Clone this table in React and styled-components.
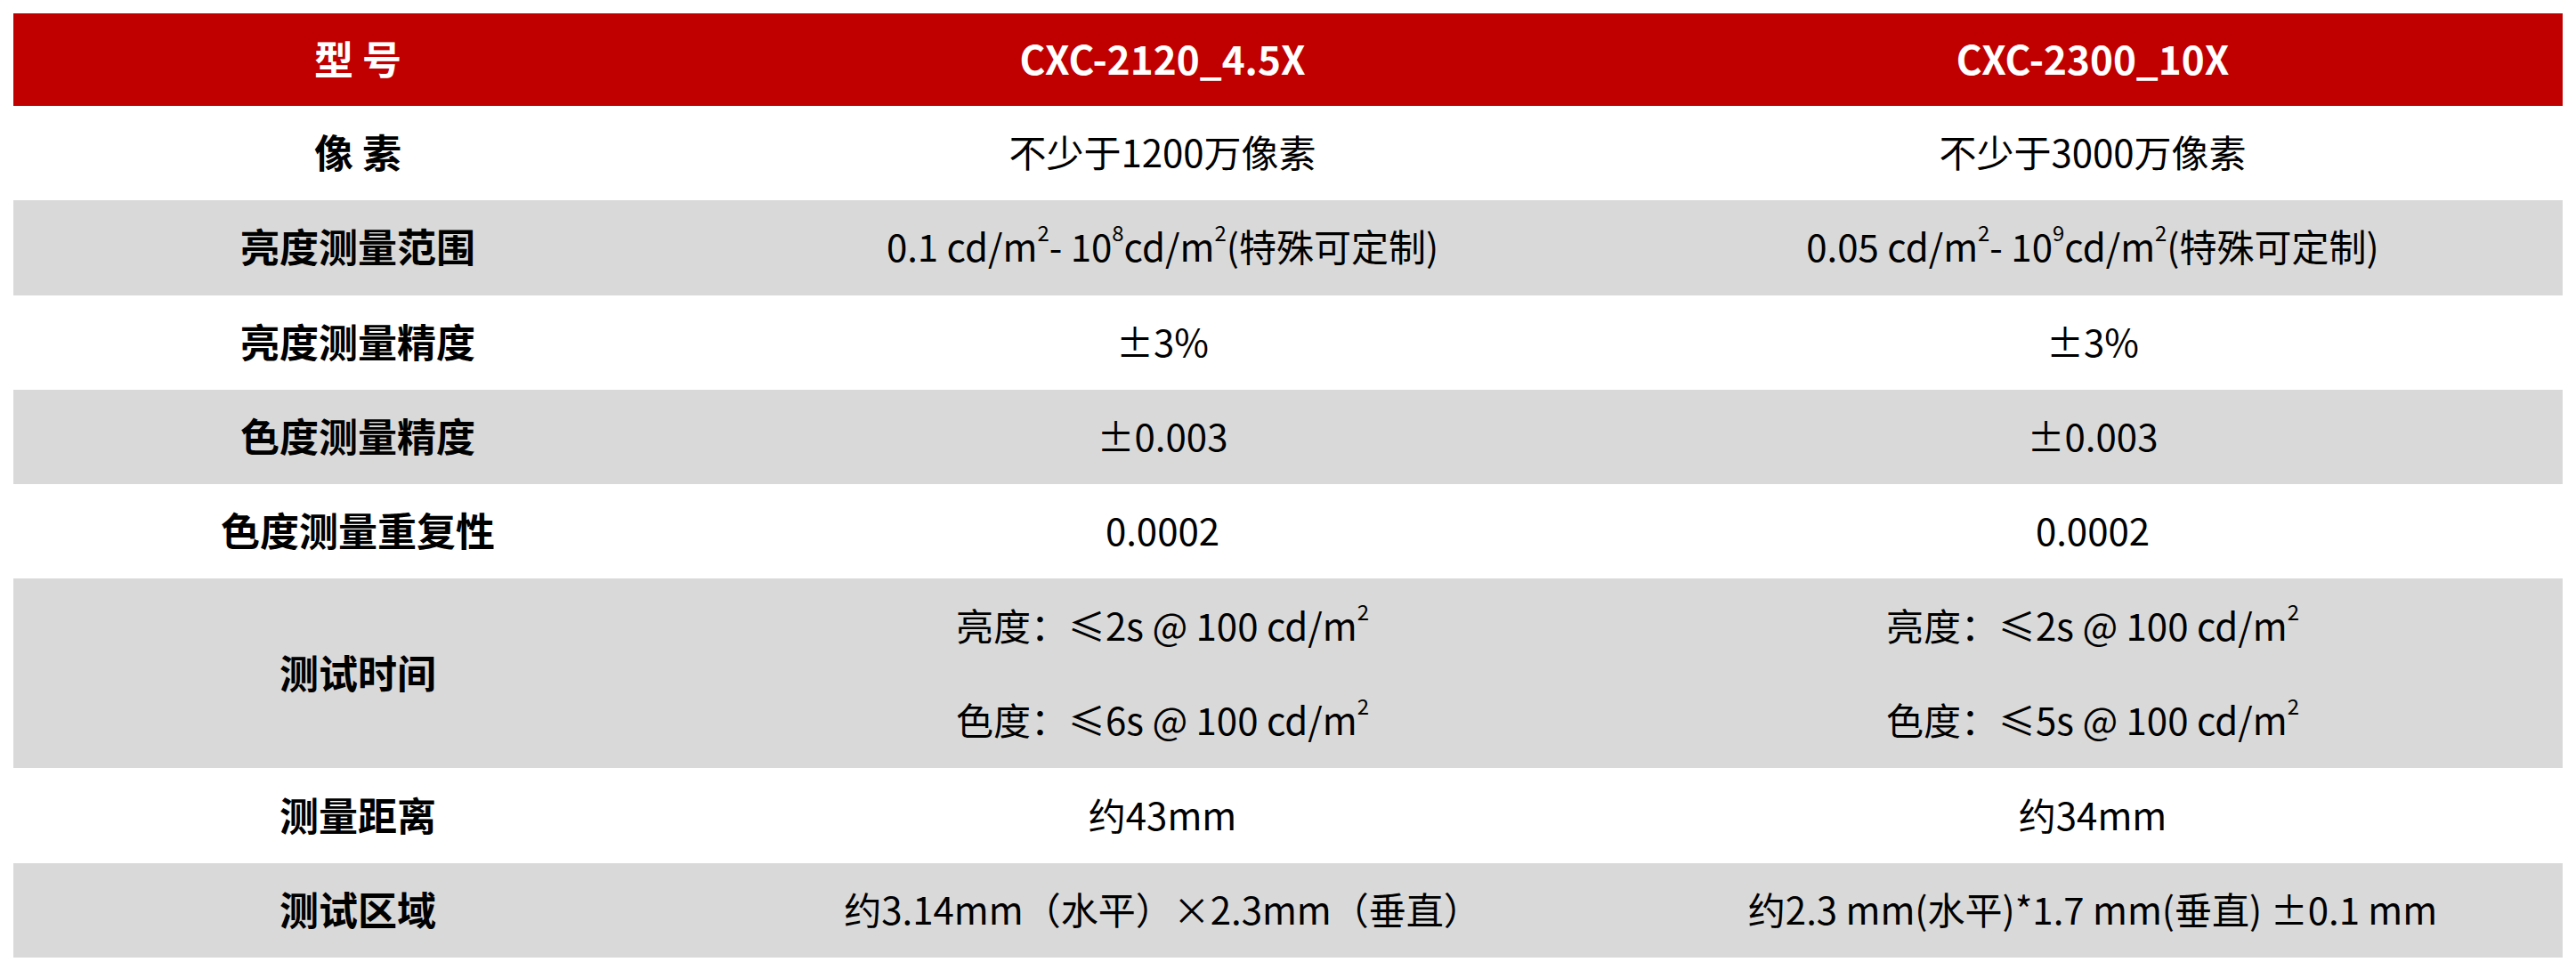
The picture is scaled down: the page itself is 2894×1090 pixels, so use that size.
import React from "react";
import styled, { createGlobalStyle } from "styled-components";

const Global = createGlobalStyle`
  html, body { margin: 0; padding: 0; background: #ffffff; }
  body { font-family: "Noto Sans CJK SC", "Noto Sans", sans-serif; }
  *, *::before, *::after { box-sizing: border-box; }
`;

const Page = styled.div`
  padding: 15px 15px 0 15px;
`;

const Table = styled.table`
  width: 100%;
  border-collapse: collapse;
  table-layout: fixed;
  font-family: "Noto Sans CJK SC", "Noto Sans", sans-serif;
  color: #000000;
`;

const HeadRow = styled.tr`
  background: #c00000;
  height: 104px;
`;

const HeadCell = styled.th`
  padding: 0 0 4px 0;
  color: #ffffff;
  font-size: 44px;
  font-weight: 700;
  text-align: center;
  vertical-align: middle;
  line-height: 1;
`;

const Row = styled.tr`
  background: ${(p) => (p.$shade ? "#d9d9d9" : "#ffffff")};
  height: ${(p) => (p.$double ? "213px" : "106.3px")};
`;

const Label = styled.td`
  padding: 0 0 4px 0;
  text-align: center;
  vertical-align: middle;
  font-size: 44px;
  font-weight: 700;
  line-height: 1;
`;

const Value = styled.td`
  padding: ${(p) => (p.$double ? "0" : "0 0 4px 0")};
  text-align: center;
  vertical-align: middle;
  font-size: 42px;
  font-weight: 400;
  line-height: 1;
`;

const Lines = styled.div`
  display: flex;
  flex-direction: column;
`;

const Line = styled.div`
  height: 106.5px;
  padding-bottom: 4px;
  display: flex;
  align-items: center;
  justify-content: center;
`;

const Sup = styled.sup`
  font-size: 0.57em;
  line-height: 0;
  vertical-align: 0.95em;
`;

const M2 = () => (
  <>
    cd/m<Sup>2</Sup>
  </>
);

const rows = [
  { label: "像 素", a: "不少于1200万像素", b: "不少于3000万像素" },
  {
    label: "亮度测量范围",
    a: (
      <>
        0.1 <M2 />- 10<Sup>8</Sup>
        <M2 />(特殊可定制)
      </>
    ),
    b: (
      <>
        0.05 <M2 />- 10<Sup>9</Sup>
        <M2 />(特殊可定制)
      </>
    ),
  },
  { label: "亮度测量精度", a: "±3%", b: "±3%" },
  { label: "色度测量精度", a: "±0.003", b: "±0.003" },
  { label: "色度测量重复性", a: "0.0002", b: "0.0002" },
  {
    label: "测试时间",
    double: true,
    a: [
      <>亮度：≤2s @ 100 <M2 /></>,
      <>色度：≤6s @ 100 <M2 /></>,
    ],
    b: [
      <>亮度：≤2s @ 100 <M2 /></>,
      <>色度：≤5s @ 100 <M2 /></>,
    ],
  },
  { label: "测量距离", a: "约43mm", b: "约34mm" },
  {
    label: "测试区域",
    a: "约3.14mm（水平）×2.3mm（垂直）",
    b: "约2.3 mm(水平)*1.7 mm(垂直) ±0.1 mm",
  },
];

const renderValue = (v, dbl) =>
  dbl ? (
    <Lines>
      {v.map((l, i) => (
        <Line key={i}>
          <span>{l}</span>
        </Line>
      ))}
    </Lines>
  ) : (
    v
  );

export default function App() {
  return (
    <>
      <Global />
      <Page>
        <Table>
          <colgroup>
            <col style={{ width: "774px" }} />
            <col style={{ width: "1034px" }} />
            <col />
          </colgroup>
          <thead>
            <HeadRow>
              <HeadCell>型 号</HeadCell>
              <HeadCell>CXC-2120_4.5X</HeadCell>
              <HeadCell>CXC-2300_10X</HeadCell>
            </HeadRow>
          </thead>
          <tbody>
            {rows.map((r, i) => (
              <Row key={i} $shade={i % 2 === 1} $double={r.double}>
                <Label>{r.label}</Label>
                <Value $double={r.double}>{renderValue(r.a, r.double)}</Value>
                <Value $double={r.double}>{renderValue(r.b, r.double)}</Value>
              </Row>
            ))}
          </tbody>
        </Table>
      </Page>
    </>
  );
}
